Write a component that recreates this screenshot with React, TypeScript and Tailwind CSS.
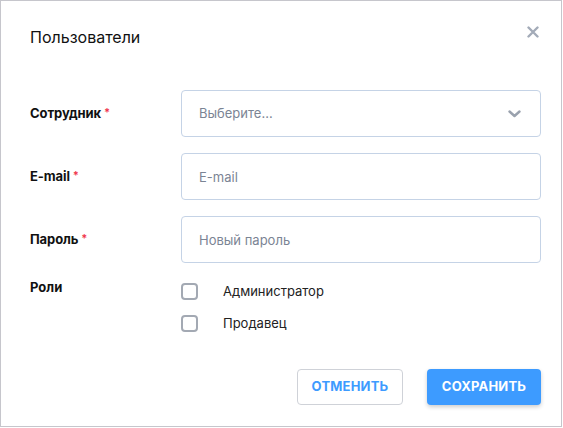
import { useState } from "react";

function Field({ label, children }: { label: string; children: React.ReactNode }) {
  return (
    <div className="flex items-center">
      <div className="w-[151px] shrink-0 text-[13px] font-bold text-[#111] tracking-[-0.1px]">
        {label}
        <span className="ml-[3px] text-[#f0394e] align-top text-[11px]">*</span>
      </div>
      {children}
    </div>
  );
}

function Checkbox({ label }: { label: string }) {
  const [checked, setChecked] = useState(false);
  return (
    <label className="flex items-center h-[17px] cursor-pointer">
      <span
        onClick={() => setChecked(!checked)}
        className="w-[17px] h-[17px] rounded-[4px] border-2 border-[#a3a9b3] bg-white"
      />
      <span className="ml-[25px] text-[13px] text-[#222]">{label}</span>
    </label>
  );
}

export default function App() {
  return (
    <div
      className="w-[562px] h-[427px] bg-white border border-[#c6c6cc] flex flex-col"
      style={{ fontFamily: "Inter, 'Open Sans', sans-serif" }}
    >
      <div className="flex items-start justify-between pl-[29px] pr-[22px] pt-[26px]">
        <h1 className="text-[16px] leading-[20px] text-[#111]">Пользователи</h1>
        <button className="mt-[-1px] text-[#a3abb8]">
          <svg width="12" height="12" viewBox="0 0 12 12">
            <path d="M1.5 1.5L10.5 10.5M10.5 1.5L1.5 10.5" stroke="currentColor" strokeWidth="2.4" strokeLinecap="round" />
          </svg>
        </button>
      </div>

      <div className="flex flex-col pl-[29px] pr-[20px] mt-[43px] gap-[16px]">
        <Field label="Сотрудник">
          <div className="flex-1 h-[47px] rounded-[4px] border border-[#c5d3e6] flex items-center justify-between pl-[17px] pr-[19px]">
            <span className="text-[13px] text-[#7b8494]">Выберите...</span>
            <svg width="13" height="8" viewBox="0 0 13 8">
              <path d="M1.5 1.5L6.5 6L11.5 1.5" stroke="#9aa2ae" strokeWidth="2.4" fill="none" strokeLinecap="round" strokeLinejoin="round" />
            </svg>
          </div>
        </Field>
        <Field label="E-mail">
          <input
            placeholder="E-mail"
            className="flex-1 h-[47px] rounded-[4px] border border-[#c5d3e6] pl-[17px] text-[13px] outline-none placeholder:text-[#7b8494]"
          />
        </Field>
        <Field label="Пароль">
          <input
            placeholder="Новый пароль"
            className="flex-1 h-[47px] rounded-[4px] border border-[#c5d3e6] pl-[17px] text-[13px] outline-none placeholder:text-[#7b8494]"
          />
        </Field>

        <div className="flex mt-[4px]">
          <div className="w-[151px] shrink-0 text-[13px] font-bold text-[#111] leading-[17px] mt-[-4px]">Роли</div>
          <div className="flex flex-col gap-[15px]">
            <Checkbox label="Администратор" />
            <Checkbox label="Продавец" />
          </div>
        </div>
      </div>

      <div className="flex justify-end gap-[24px] pr-[20px] mt-[37px]">
        <button className="w-[106px] h-[36px] rounded-[4px] border border-[#cfd2d8] bg-white text-[13px] font-bold text-[#3d9bff] tracking-[0.2px]">
          ОТМЕНИТЬ
        </button>
        <button className="w-[114px] h-[36px] rounded-[4px] bg-[#3d9bff] text-[13px] font-bold text-white tracking-[0.2px] shadow-[0_2px_4px_rgba(0,0,0,0.2)]">
          СОХРАНИТЬ
        </button>
      </div>
    </div>
  );
}
